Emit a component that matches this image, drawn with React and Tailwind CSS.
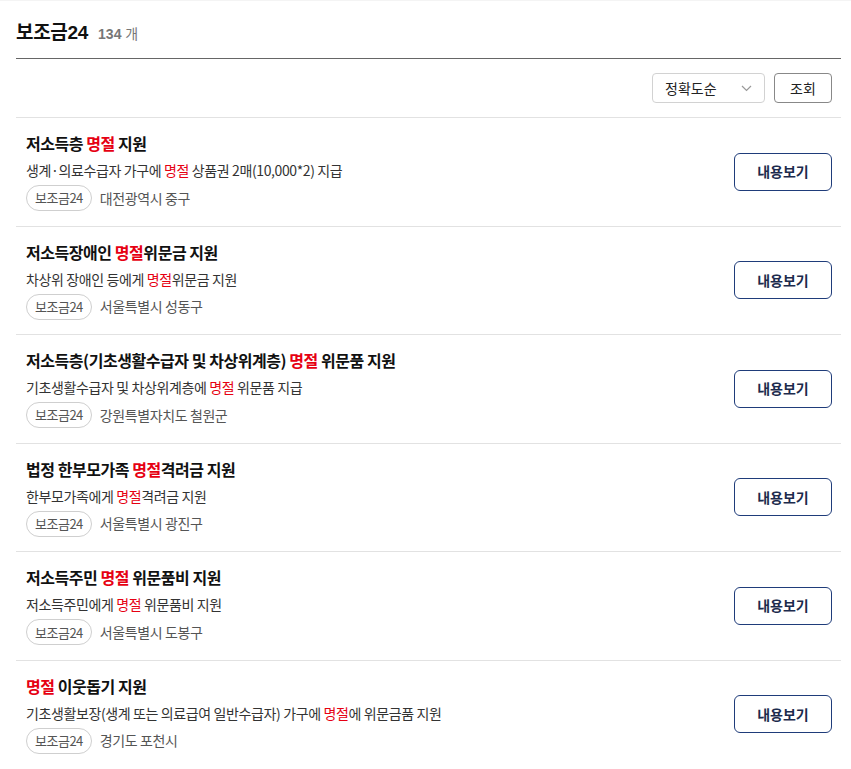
import React from "react";

const items = [
  {
    title: [["저소득층 "], ["명절", true], [" 지원"]],
    desc: [["생계·의료수급자 가구에 "], ["명절", true], [" 상품권 2매(10,000*2) 지급"]],
    region: "대전광역시 중구",
  },
  {
    title: [["저소득장애인 "], ["명절", true], ["위문금 지원"]],
    desc: [["차상위 장애인 등에게 "], ["명절", true], ["위문금 지원"]],
    region: "서울특별시 성동구",
  },
  {
    title: [["저소득층(기초생활수급자 및 차상위계층) "], ["명절", true], [" 위문품 지원"]],
    desc: [["기초생활수급자 및 차상위계층에 "], ["명절", true], [" 위문품 지급"]],
    region: "강원특별자치도 철원군",
  },
  {
    title: [["법정 한부모가족 "], ["명절", true], ["격려금 지원"]],
    desc: [["한부모가족에게 "], ["명절", true], ["격려금 지원"]],
    region: "서울특별시 광진구",
  },
  {
    title: [["저소득주민 "], ["명절", true], [" 위문품비 지원"]],
    desc: [["저소득주민에게 "], ["명절", true], [" 위문품비 지원"]],
    region: "서울특별시 도봉구",
  },
  {
    title: [["명절", true], [" 이웃돕기 지원"]],
    desc: [["기초생활보장(생계 또는 의료급여 일반수급자) 가구에 "], ["명절", true], ["에 위문금품 지원"]],
    region: "경기도 포천시",
  },
];

const Highlighted = ({ parts }) =>
  parts.map(([text, hl], i) =>
    hl ? (
      <span key={i} className="text-[#e60012]">{text}</span>
    ) : (
      <span key={i}>{text}</span>
    )
  );

const ResultRow = ({ item }) => (
  <li className="flex items-center justify-between border-t border-[#e2e2e2] pl-[10px] pr-[9px] pt-[14px] pb-[14.6px]">
    <div className="flex flex-col" style={{ fontFamily: '"Noto Sans CJK KR", sans-serif' }}>
      <div className="text-[16px] leading-[22px] font-bold text-[#111] tracking-[-0.45px]">
        <Highlighted parts={item.title} />
      </div>
      <div className="mt-[5px] text-[14px] leading-[22px] text-[#333] tracking-[-0.38px]">
        <Highlighted parts={item.desc} />
      </div>
      <div className="mt-[4px] flex items-center gap-[8px]">
        <span className="h-[26px] px-[8px] flex items-center rounded-full border border-[#cfcfcf] text-[13px] text-[#555] tracking-[-0.5px]">
          보조금24
        </span>
        <span className="text-[14px] text-[#555] tracking-[-0.4px]">{item.region}</span>
      </div>
    </div>
    <button
      className="w-[98px] h-[38px] rounded-[6px] border-[1.5px] border-[#1f3c7a] text-[14px] font-bold text-[#1c2b4d] bg-white"
      style={{ fontFamily: '"Noto Sans CJK KR", sans-serif' }}
    >
      내용보기
    </button>
  </li>
);

export default function App() {
  return (
    <div
      className="min-h-screen bg-white border-t border-[#f4f4f4]"
      style={{ fontFamily: '"Liberation Sans", "Noto Sans CJK KR", sans-serif' }}
    >
      <div className="ml-[16px] w-[825px]">
        {/* Header */}
        <div className="flex items-baseline gap-[10px] pt-[19px] pb-[12px] border-b border-[#666]">
          <h2 className="text-[19px] leading-[26px] font-bold text-[#111] tracking-[-0.3px]">보조금24</h2>
          <span className="text-[14px] font-bold text-[#777]">
            134 <span className="font-normal">개</span>
          </span>
        </div>

        {/* Toolbar */}
        <div
          className="flex justify-end gap-[9px] pt-[14px] pb-[14px] pr-[9px]"
          style={{ fontFamily: '"Noto Sans CJK KR", sans-serif' }}
        >
          <div className="w-[113px] h-[30px] rounded-[4px] border border-[#d2d2d2] flex items-center justify-between pl-[12px] pr-[12px] text-[14px] text-[#222]">
            <span>정확도순</span>
            <svg width="11" height="7" viewBox="0 0 11 7" fill="none">
              <path d="M1 1l4.5 4.5L10 1" stroke="#999" strokeWidth="1.2" />
            </svg>
          </div>
          <button className="w-[58px] h-[30px] rounded-[4px] border border-[#888] text-[14px] text-[#222] bg-white">
            조회
          </button>
        </div>

        {/* List */}
        <ul>
          {items.map((item, i) => (
            <ResultRow key={i} item={item} />
          ))}
        </ul>
      </div>
    </div>
  );
}
